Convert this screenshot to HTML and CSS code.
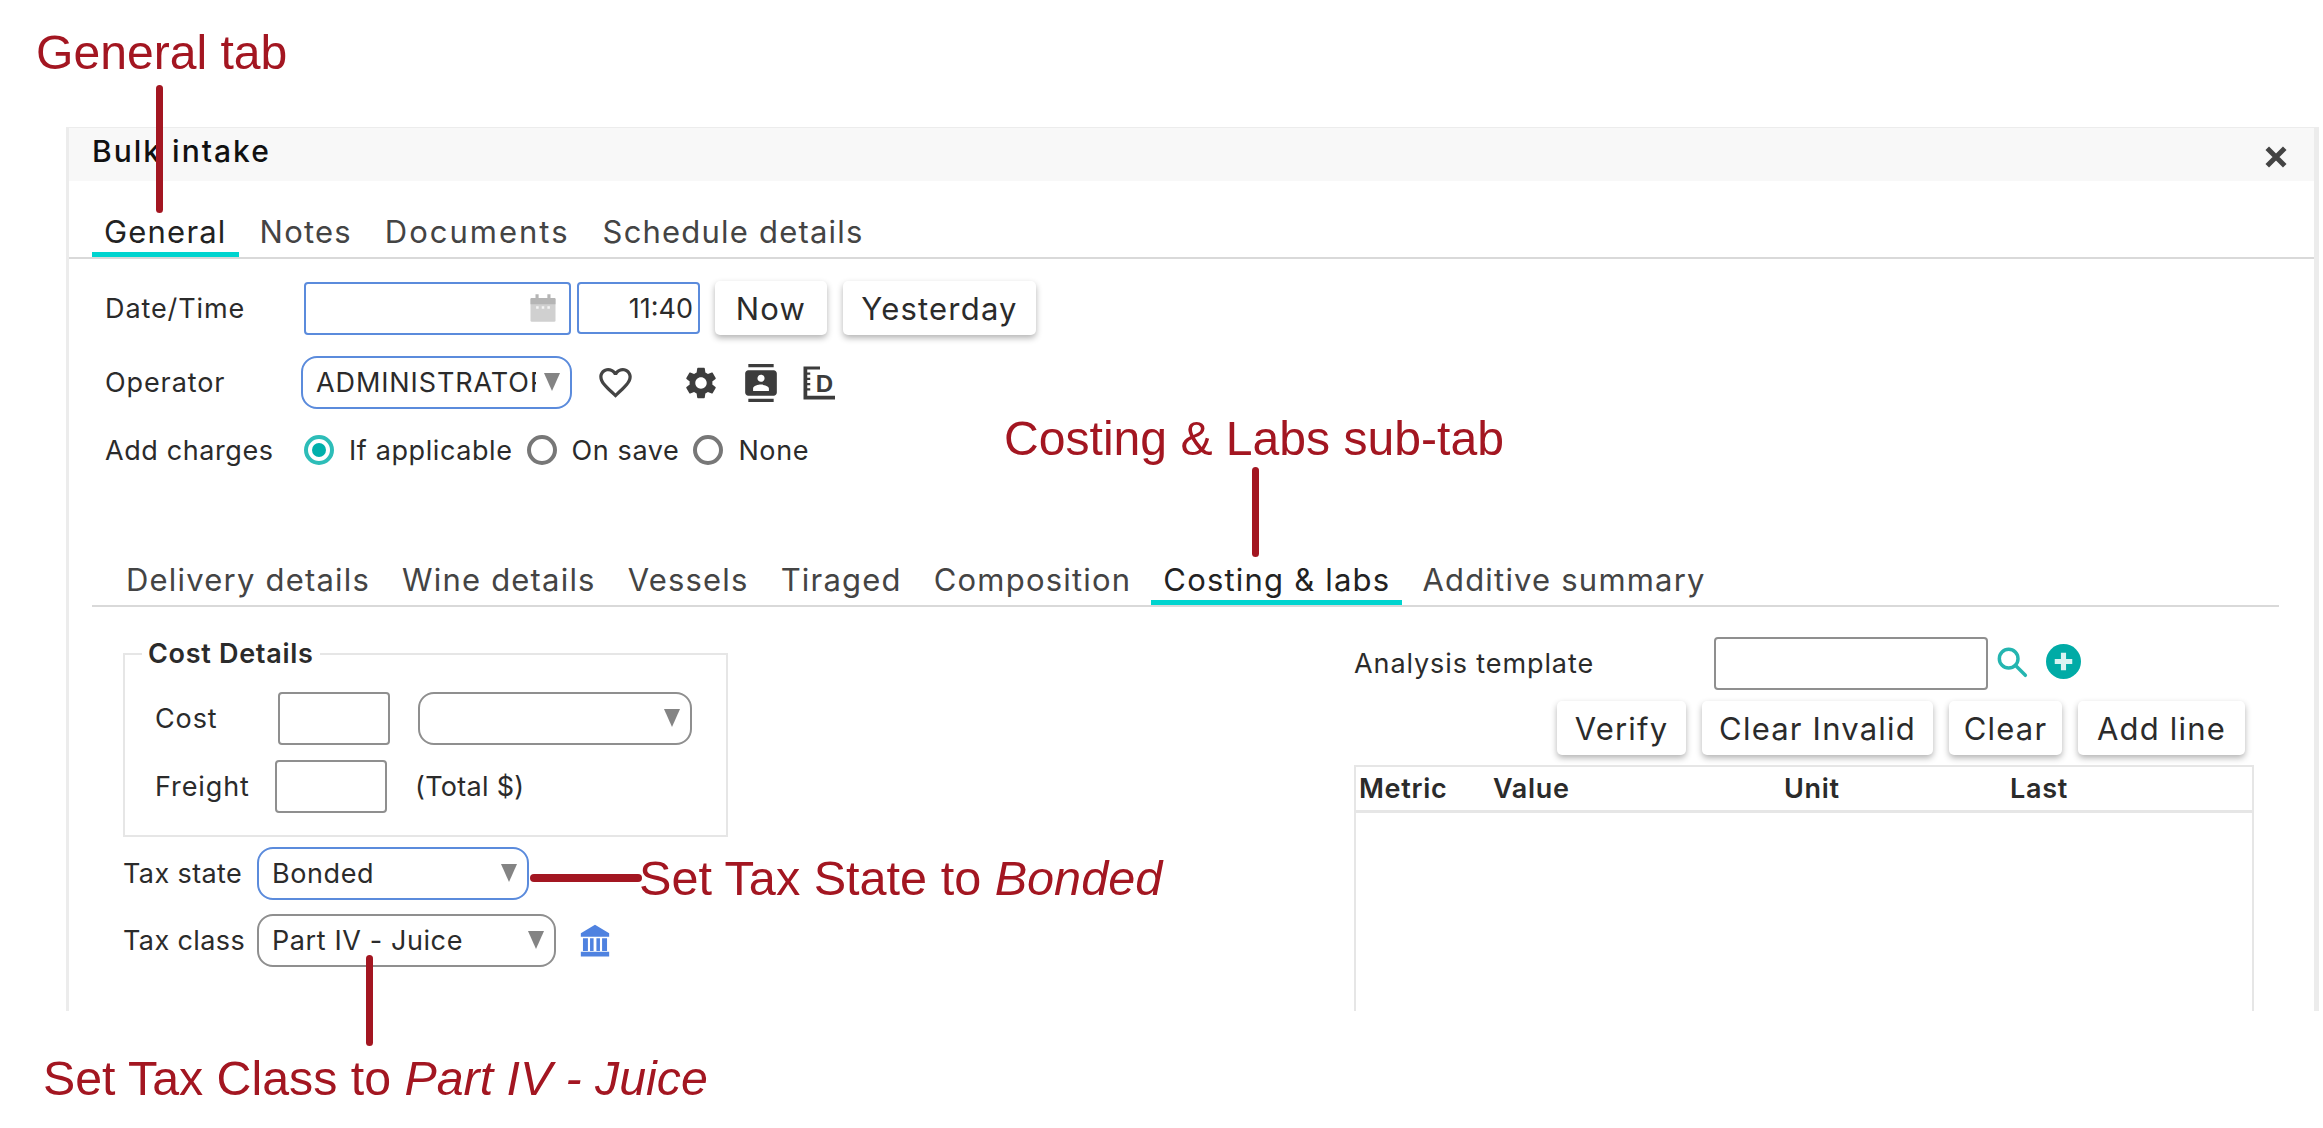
FILE: index.html
```html
<!DOCTYPE html>
<html lang="en">
<head>
<meta charset="utf-8">
<title>Bulk intake</title>
<link rel="stylesheet" href="styles.css">
</head>
<body>
<section class="dialog">
  <header class="dialog-head">
    <h1 class="dialog-title">Bulk intake</h1>
    <svg class="close-icon" viewBox="0 0 24 24"><path d="M5 5l14 14M19 5L5 19"/></svg>
  </header>
  <nav class="tabs main-tabs">
    <span class="tab active">General</span>
    <span class="tab">Notes</span>
    <span class="tab tab-docs">Documents</span>
    <span class="tab">Schedule details</span>
  </nav>
  <div class="form-top">
    <div class="row row-date">
      <label class="row-label">Date/Time</label>
      <span class="input date-input focus">
        <svg class="cal-icon" viewBox="0 0 24 24"><rect class="cal-body" x="2" y="4" width="20" height="19" rx="1"/><path class="cal-band" d="M6 1h2.500v3H15.500V1H18v3h3a1 1 0 0 1 1 1v4H2V5a1 1 0 0 1 1-1h3z"/><path class="cal-dots" d="M6.500 10.500h2v2h-2zm4.500 0h2v2h-2zm4.500 0h2v2h-2z"/></svg>
      </span>
      <span class="input time-input focus">11:40</span>
      <button class="btn btn-now">Now</button>
      <button class="btn btn-yesterday">Yesterday</button>
    </div>
    <div class="row row-operator">
      <label class="row-label">Operator</label>
      <span class="select focus operator-select"><span class="select-text">ADMINISTRATOR</span></span>
      <svg class="icon heart" viewBox="0 0 24 24"><path d="M16.500 3c-1.740 0-3.410.81-4.500 2.090C10.910 3.810 9.240 3 7.500 3 4.420 3 2 5.420 2 8.500c0 3.780 3.400 6.860 8.550 11.540L12 21.350l1.450-1.320C18.600 15.360 22 12.280 22 8.500 22 5.420 19.580 3 16.500 3zm-4.400 15.550l-.1.100-.1-.1C7.140 14.240 4 11.390 4 8.500 4 6.500 5.500 5 7.500 5c1.540 0 3.040.99 3.570 2.360h1.870C13.460 5.990 14.960 5 16.500 5c2 0 3.500 1.500 3.500 3.500 0 2.890-3.140 5.740-7.900 10.050z"/></svg>
      <svg class="icon gear" viewBox="0 0 24 24"><path d="M19.140 12.940c.04-.3.060-.61.060-.94 0-.32-.02-.64-.07-.94l2.030-1.580c.18-.14.230-.41.120-.61l-1.920-3.320c-.12-.22-.37-.29-.59-.22l-2.390.96c-.5-.38-1.030-.7-1.620-.94l-.36-2.540c-.04-.24-.24-.41-.48-.41h-3.840c-.24 0-.43.170-.47.410l-.36 2.540c-.59.240-1.130.570-1.620.94l-2.390-.96c-.22-.08-.47 0-.59.220L2.740 8.870c-.12.210-.08.470.12.610l2.030 1.580c-.05.3-.09.630-.09.940s.02.640.07.940l-2.030 1.580c-.18.140-.23.410-.12.610l1.920 3.320c.12.220.37.290.59.220l2.390-.96c.5.380 1.030.7 1.620.94l.36 2.540c.05.240.24.410.48.410h3.840c.24 0 .44-.17.470-.41l.36-2.540c.59-.24 1.130-.56 1.620-.94l2.390.96c.22.080.47 0 .59-.22l1.920-3.320c.12-.22.070-.47-.12-.61l-2.010-1.580zM12 15.600c-1.980 0-3.600-1.620-3.600-3.600s1.620-3.600 3.600-3.600 3.600 1.620 3.600 3.600-1.620 3.600-3.600 3.600z"/></svg>
      <svg class="icon contact" viewBox="0 0 24 24"><path d="M20 0H4v2h16V0zM4 24h16v-2H4v2zM20 4H4c-1.100 0-2 .9-2 2v12c0 1.100.9 2 2 2h16c1.100 0 2-.9 2-2V6c0-1.100-.9-2-2-2zm-8 2.750c1.240 0 2.250 1.010 2.250 2.250s-1.010 2.250-2.250 2.250S9.750 10.240 9.750 9 10.760 6.750 12 6.750zM17 17H7v-1.500c0-1.670 3.330-2.500 5-2.500s5 .83 5 2.500V17z"/></svg>
      <svg class="icon ruler" viewBox="0 0 24 24"><path d="M1 1h11v2H3.500v2H5.500v1.500H3.500v2H5.500V10H3.500v2H5.500v1.500H3.500v2H5.500V17H3.500v3.500H22V23H1z"/><text class="ruler-letter" x="9.200" y="18">D</text></svg>
    </div>
    <div class="row row-charges">
      <label class="row-label">Add charges</label>
      <span class="radio checked"></span><span class="radio-label">If applicable</span>
      <span class="radio"></span><span class="radio-label">On save</span>
      <span class="radio"></span><span class="radio-label">None</span>
    </div>
  </div>
  <nav class="tabs sub-tabs">
    <span class="tab">Delivery details</span>
    <span class="tab">Wine details</span>
    <span class="tab">Vessels</span>
    <span class="tab">Tiraged</span>
    <span class="tab">Composition</span>
    <span class="tab active">Costing &amp; labs</span>
    <span class="tab">Additive summary</span>
  </nav>
  <div class="panel">
    <div class="panel-left">
      <fieldset class="cost-box">
        <legend>Cost Details</legend>
        <div class="cost-row">
          <label class="cost-label">Cost</label>
          <span class="input plain cost-input"></span>
          <span class="select cost-select"></span>
        </div>
        <div class="cost-row freight-row">
          <label class="freight-label">Freight</label>
          <span class="input plain freight-input"></span>
          <span class="total-note">(Total $)</span>
        </div>
      </fieldset>
      <div class="tax-row state-row">
        <label class="tax-label">Tax state</label>
        <span class="select focus state-select"><span class="select-text">Bonded</span></span>
      </div>
      <div class="tax-row class-row">
        <label class="tax-label">Tax class</label>
        <span class="select class-select"><span class="select-text">Part IV - Juice</span></span>
        <svg class="bank-icon" viewBox="0 0 24 24"><path d="M12 0.500L2 6.500V9h20V6.500zM3.500 10h3.500v9H3.500zM8.500 10H11v9H8.500zM13 10h2.500v9H13zM17 10h3.500v9H17zM2 19.500h20V23H2z"/></svg>
      </div>
    </div>
    <div class="panel-right">
      <div class="template-row">
        <label class="template-label">Analysis template</label>
        <span class="input plain template-input"></span>
        <svg class="search-icon" viewBox="0 0 24 24"><circle cx="9.500" cy="9.500" r="7"/><path d="M14.700 14.700L22 22"/></svg>
        <svg class="plus-icon" viewBox="0 0 24 24"><circle cx="12" cy="12" r="12"/><path d="M12 6v12M6 12h12"/></svg>
      </div>
      <div class="action-row">
        <button class="btn btn-verify">Verify</button>
        <button class="btn btn-invalid">Clear Invalid</button>
        <button class="btn btn-clear">Clear</button>
        <button class="btn btn-add">Add line</button>
      </div>
      <div class="metric-table">
        <div class="metric-head">
          <span>Metric</span><span>Value</span><span>Unit</span><span>Last</span>
        </div>
      </div>
    </div>
  </div>
</section>

<div class="note note-general">General tab</div>
<div class="note note-costing">Costing &amp; Labs sub-tab</div>
<div class="note note-state">Set Tax State to <em>Bonded</em></div>
<div class="note note-class">Set Tax Class to <em>Part IV - Juice</em></div>
<div class="pointer pointer-general"></div>
<div class="pointer pointer-costing"></div>
<div class="pointer pointer-state"></div>
<div class="pointer pointer-class"></div>
</body>
</html>
```
FILE: styles.css
```css
* { box-sizing: border-box; }
html, body { margin: 0; height: 100%; }
body {
  position: relative;
  width: 2323px;
  height: 1128px;
  overflow: hidden;
  background: #fff;
  padding: 127px 0 0 66px;
  font-family: Inter, "Liberation Sans", sans-serif;
  color: #2b2b2b;
  font-size: 27px;
  letter-spacing: 0.9px;
}

.dialog {
  width: 2253px;
  height: 884px;
  overflow: hidden;
  border-top: 1px solid #ececec;
  border-left: 3px solid #ececec;
  border-right: 5px solid #ececec;
  background: #fff;
}
.dialog-head {
  height: 53px;
  background: #f8f8f8;
  display: flex;
  align-items: center;
  justify-content: space-between;
  padding: 0 23px 8px 23px;
}
.dialog-title { margin: 0; font-size: 30px; font-weight: 500; color: #111; letter-spacing: 2px; }
.close-icon { width: 30px; height: 30px; margin-top: 13px; }
.close-icon path { fill: none; stroke: #444; stroke-width: 4; }

.tabs { display: flex; align-items: flex-end; border-bottom: 2px solid #d9d9d9; }
.tab {
  font-size: 31px;
  line-height: 38px;
  padding: 0 12px 1px;
  border-bottom: 5px solid transparent;
  margin-right: 9px;
  color: #444;
  letter-spacing: 1.2px;
  white-space: nowrap;
}
.tab.active { border-bottom-color: #00d4cf; color: #222; }
.tab-docs { letter-spacing: 2px; }
.main-tabs { height: 78px; padding-left: 23px; }
.sub-tabs {
  height: 64px;
  margin: 78px 35px 0 23px;
  padding-left: 22px;
}
.sub-tabs .tab { margin-right: 8px; }

.form-top { padding-left: 36px; }
.row { display: flex; align-items: center; }
.row-label { width: 199px; flex: none; }
.row-date { margin-top: 22px; height: 54px; }
.row-operator { margin-top: 21px; height: 53px; }
.row-operator .row-label { width: 196px; }
.row-charges { margin-top: 26px; height: 30px; }
.row-charges .row-label { width: 199px; letter-spacing: 0.6px; }

.input {
  display: flex;
  align-items: center;
  flex: none;
  background: #fff;
  border-radius: 4px;
  border: 2px solid #8f8f8f;
}
.input.focus, .select.focus { border-color: #5b8bdc; }
.date-input { width: 267px; height: 53px; justify-content: flex-end; padding-right: 11px; }
.time-input { width: 123px; height: 52px; margin-left: 6px; justify-content: flex-end; padding-right: 5px; letter-spacing: 0; }
.cal-icon { width: 30px; height: 32px; }
.cal-body { fill: #d0d0d0; }
.cal-band { fill: #b5b5b5; }
.cal-dots { fill: #f4f4f4; }

.select {
  position: relative;
  display: flex;
  align-items: center;
  flex: none;
  height: 53px;
  border: 2px solid #8f8f8f;
  border-radius: 16px;
  background: #fff;
  padding-left: 13px;
  overflow: hidden;
  letter-spacing: 0.6px;
}
.select::after {
  content: "";
  position: absolute;
  right: 10px;
  top: 15px;
  border-left: 8px solid transparent;
  border-right: 8px solid transparent;
  border-top: 18px solid #848484;
}
.select-text { overflow: hidden; white-space: nowrap; }
.operator-select { width: 271px; padding-right: 34px; letter-spacing: 0.9px; }

.btn {
  font: inherit;
  letter-spacing: 1.2px;
  font-size: 31px;
  color: #2b2b2b;
  background: #fff;
  border: 0;
  border-radius: 5px;
  box-shadow: 0 3px 6px rgba(0, 0, 0, 0.3);
  height: 54px;
  padding: 0;
  flex: none;
}
.btn-now { width: 112px; margin-left: 15px; }
.btn-yesterday { width: 193px; margin-left: 16px; }

.icon { fill: #3c3c3c; flex: none; }
.heart { width: 39px; height: 39px; margin-left: 24px; fill: #444; }
.gear { width: 38px; height: 38px; margin-left: 47px; }
.contact { width: 38px; height: 40px; margin-left: 22px; }
.ruler { width: 36px; height: 38px; margin-left: 22px; }
.ruler-letter { font-family: "Liberation Sans", sans-serif; font-size: 16px; font-weight: 700; letter-spacing: 0; fill: #3c3c3c; }

.radio {
  width: 30px;
  height: 30px;
  border-radius: 50%;
  border: 4px solid #777;
  background: #fff;
  flex: none;
  margin-right: 15px;
}
.radio.checked { border-color: #2dbdb8; padding: 4px; background: #00b0ab content-box; }
.radio-label { margin-right: 14px; white-space: nowrap; letter-spacing: 0.6px; }

.panel { display: flex; align-items: flex-start; }
.panel-left { width: 605px; margin-left: 54px; flex: none; }
.panel-right { width: 900px; margin-left: 626px; flex: none; margin-top: 30px; }

.cost-box {
  margin: 32px 0 0;
  padding: 23px 0 22px 30px;
  border: 2px solid #e6e6e6;
  min-width: 0;
}
.cost-box legend { font-weight: 600; padding: 0 6px; margin-left: -13px; line-height: 30px; letter-spacing: 0.7px; }
.cost-row { display: flex; align-items: center; height: 53px; }
.freight-row { margin-top: 15px; }
.cost-label { width: 123px; }
.freight-label { width: 120px; }
.input.plain { height: 53px; }
.cost-input { width: 112px; }
.freight-input { width: 112px; }
.cost-select { width: 274px; margin-left: 28px; }
.total-note { margin-left: 28px; letter-spacing: 0.3px; }

.tax-row { display: flex; align-items: center; }
.state-row { margin-top: 10px; }
.class-row { margin-top: 14px; }
.tax-label { width: 134px; flex: none; letter-spacing: 0.4px; }
.state-select { width: 272px; }
.class-select { width: 299px; }
.bank-icon { width: 34px; height: 34px; margin-left: 22px; fill: #4f82e0; }

.template-row { display: flex; align-items: center; height: 53px; }
.template-label { width: 360px; flex: none; }
.template-input { width: 274px; }
.search-icon { width: 32px; height: 32px; margin: -4px 0 0 8px; fill: none; stroke: #24b5b0; stroke-width: 2.600; stroke-linecap: round; }
.plus-icon { width: 35px; height: 35px; margin: -4px 0 0 18px; }
.plus-icon circle { fill: #00aba6; }
.plus-icon path { stroke: #d9f3f2; stroke-width: 3.500; }

.action-row { display: flex; justify-content: flex-end; margin-top: 11px; padding-right: 9px; }
.btn-verify { width: 129px; }
.btn-invalid { width: 231px; margin-left: 16px; }
.btn-clear { width: 113px; margin-left: 16px; }
.btn-add { width: 167px; margin-left: 16px; }

.metric-table { margin-top: 10px; height: 300px; border: 2px solid #e6e6e6; }
.metric-head {
  display: grid;
  grid-template-columns: 134px 291px 226px 1fr;
  align-items: center;
  height: 46px;
  padding-left: 3px;
  border-bottom: 3px solid #e6e6e6;
  font-weight: 600;
  letter-spacing: 0.7px;
}

.note {
  position: absolute;
  font-family: "Liberation Sans", Arial, sans-serif;
  font-size: 48.100px;
  line-height: 56px;
  letter-spacing: 0;
  color: #a31621;
  white-space: nowrap;
}
.note-general { left: 36px; top: 24px; }
.note-costing { left: 1004px; top: 410px; }
.note-state { left: 639px; top: 850px; font-size: 48.600px; }
.note-class { left: 43px; top: 1050px; font-size: 48.300px; }

.pointer { position: absolute; background: #a31621; border-radius: 4px; }
.pointer-general { left: 156px; top: 85px; width: 7px; height: 128px; }
.pointer-costing { left: 1252px; top: 467px; width: 7px; height: 90px; }
.pointer-state { left: 530px; top: 874px; width: 112px; height: 8px; }
.pointer-class { left: 366px; top: 955px; width: 7px; height: 91px; }
```
